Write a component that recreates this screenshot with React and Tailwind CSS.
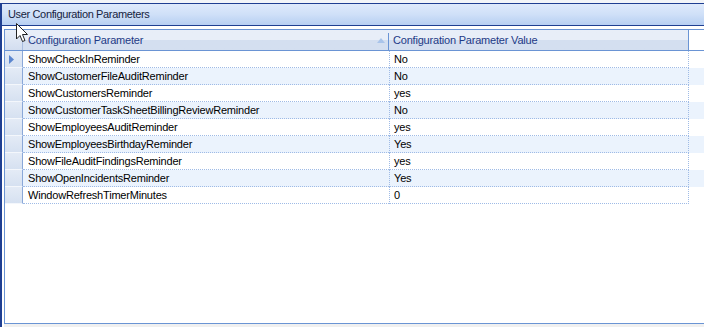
import React from 'react';

const rows = [
  ['ShowCheckInReminder', 'No'],
  ['ShowCustomerFileAuditReminder', 'No'],
  ['ShowCustomersReminder', 'yes'],
  ['ShowCustomerTaskSheetBillingReviewReminder', 'No'],
  ['ShowEmployeesAuditReminder', 'yes'],
  ['ShowEmployeesBirthdayReminder', 'Yes'],
  ['ShowFileAuditFindingsReminder', 'yes'],
  ['ShowOpenIncidentsReminder', 'Yes'],
  ['WindowRefreshTimerMinutes', '0'],
];

function Cursor() {
  return (
    <svg className="absolute left-[16px] top-[23px]" width="14" height="21" viewBox="0 0 14 21">
      <path d="M0.5 0.5 L0.5 16 L4 12.5 L6.5 18.5 L9 17.5 L6.5 11.5 L11.5 11.5 Z" fill="#fff" stroke="#222" strokeWidth="1" />
    </svg>
  );
}

export default function App() {
  return (
    <div className="relative w-[704px] h-[327px] overflow-hidden bg-[#f3f5f8] font-['Liberation_Sans',Arial,sans-serif] text-[11px] tracking-[-0.2px] text-black">
      <div className="mt-[3px] h-[324px] border-l-2 border-[#1f3f92] flex flex-col">
        {/* title bar */}
        <div className="h-[23px] border-y border-[#1f3f92] bg-gradient-to-b from-[#dfeafb] via-[#cfe0f8] to-[#b7cff2] pl-[6px] flex items-center text-[11px] tracking-[-0.35px] text-[#15233f]">
          User Configuration Parameters
        </div>

        {/* body */}
        <div className="flex-1 bg-white pl-[2px] pt-[3px] flex flex-col">
          <div className="flex-1 border-l border-t border-b border-[#6a94d4] bg-white">
            {/* header */}
            <div className="flex h-[21px] border-b border-[#6a94d4]">
              <div className="w-[18px] bg-gradient-to-b from-[#e8eef8] to-[#d3def0] border-r border-[#a9bde0]" />
              <div className="w-[366px] relative flex items-center pl-[5px] bg-gradient-to-b from-[#e8eef8] from-50% to-[#d4dff0] to-50% text-[#1d3a86]">
                Configuration Parameter
                <svg className="absolute left-[354px] top-[8px]" width="8" height="5" viewBox="0 0 8 5">
                  <path d="M0 5 L4 0 L8 5 Z" fill="#a9c4ea" />
                </svg>
                <div className="absolute right-0 top-[3px] bottom-0 w-px bg-[#6a94d4]" />
              </div>
              <div className="w-[300px] flex items-center pl-[4px] bg-gradient-to-b from-[#e8eef8] from-50% to-[#d4dff0] to-50% border-r border-[#6a94d4] text-[#1d3a86]">
                Configuration Parameter Value
              </div>
            </div>

            {/* rows */}
            {rows.map(([name, value], i) => (
              <div key={name} className={`flex h-[17px] ${i % 2 ? 'bg-[#ebf3fd]' : 'bg-white'}`}>
                <div className="w-[18px] flex items-center pl-[4px] bg-gradient-to-b from-[#e4ebf6] to-[#d6e1f1] border-r border-[#8aa8d8] border-b border-b-[#f4f7fc]">
                  {i === 0 && (
                    <svg width="5" height="9" viewBox="0 0 5 9">
                      <path d="M0 0 L5 4.5 L0 9 Z" fill="#5b86cf" />
                    </svg>
                  )}
                </div>
                <div className="w-[366px] flex items-center pl-[5px] border-b border-dotted border-[#9fbbe6]">
                  {name}
                </div>
                <div className="w-[300px] flex items-center pl-[4px] border-l border-r border-b border-dotted border-[#9fbbe6]">
                  {value}
                </div>
              </div>
            ))}
          </div>
          <div className="h-[3px] bg-[#f0f0f0]" />
        </div>
      </div>
      <Cursor />
    </div>
  );
}
